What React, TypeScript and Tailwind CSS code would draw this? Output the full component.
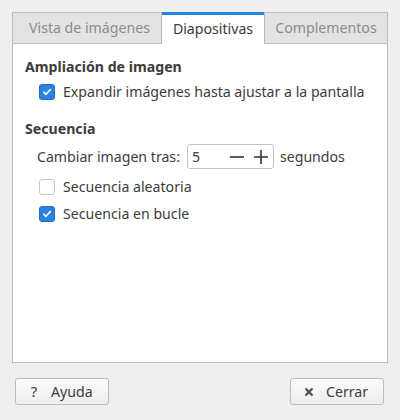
import React from "react";

const FONT = { fontFamily: '"Noto Sans", "Open Sans", sans-serif' };

function Check({ checked }: { checked: boolean }) {
  if (checked) {
    return (
      <div className="w-[16px] h-[16px] rounded-[3px] bg-[#2a83e0] border border-[#1f6fc4] flex items-center justify-center">
        <svg width="10" height="10" viewBox="0 0 10 10">
          <path d="M1.8 5.2 L4 7.3 L8.3 2.6" fill="none" stroke="white" strokeWidth="1.6" strokeLinecap="round" strokeLinejoin="round" />
        </svg>
      </div>
    );
  }
  return <div className="w-[16px] h-[16px] rounded-[3px] bg-white border border-[#c6c6c6]" />;
}

export default function App() {
  return (
    <div className="w-[400px] h-[420px] bg-[#efefef] text-[#3c3c3c] text-[14.15px] flex flex-col" style={FONT}>
      <div className="ml-[12px] mt-[12px] w-[376px] flex flex-col">
        {/* tab bar */}
        <div className="flex h-[32px]">
          <div className="w-[149px] h-full bg-[#e3e3e3] border-t border-l border-b border-[#bdbdbd] flex items-center pl-[16px] text-[#8c8c8c]">
            Vista de imágenes
          </div>
          <div className="w-[103px] h-full bg-white border-l border-[#bdbdbd] flex flex-col">
            <div className="h-[3px] bg-[#1e84e0]" />
            <div className="flex-1 flex items-center justify-center pb-[2px]">Diapositivas</div>
          </div>
          <div className="w-[124px] h-full bg-[#e3e3e3] border-t border-l border-r border-b border-[#bdbdbd] flex items-center justify-center text-[#8c8c8c]">
            Complementos
          </div>
        </div>
        {/* panel */}
        <div className="h-[319px] bg-white border-l border-r border-b border-[#bdbdbd] flex flex-col pl-[12px] pt-[13px]">
          <div className="h-[20px] flex items-center font-bold">Ampliación de imagen</div>
          <div className="h-[22px] mt-[4px] ml-[14px] flex items-center gap-[8px]">
            <Check checked />
            <span>Expandir imágenes hasta ajustar a la pantalla</span>
          </div>
          <div className="h-[20px] mt-[16px] flex items-center font-bold">Secuencia</div>
          <div className="h-[25px] mt-[5px] ml-[12px] flex items-center">
            <span>Cambiar imagen tras:</span>
            <div className="ml-[7px] w-[87px] h-[25px] rounded-[3px] border border-[#c4c4c4] bg-white flex items-center">
              <span className="ml-[4px] flex-1">5</span>
              <svg width="16" height="16" viewBox="0 0 16 16" className="mr-[8px]">
                <path d="M1 8 H15" stroke="#333" strokeWidth="1.6" />
              </svg>
              <svg width="16" height="16" viewBox="0 0 16 16" className="mr-[4px]">
                <path d="M1 8 H15 M8 1 V15" stroke="#333" strokeWidth="1.6" />
              </svg>
            </div>
            <span className="ml-[6px]">segundos</span>
          </div>
          <div className="h-[22px] mt-[7px] ml-[14px] flex items-center gap-[8px]">
            <Check checked={false} />
            <span>Secuencia aleatoria</span>
          </div>
          <div className="h-[22px] mt-[5px] ml-[14px] flex items-center gap-[8px]">
            <Check checked />
            <span>Secuencia en bucle</span>
          </div>
        </div>
      </div>
      {/* buttons */}
      <div className="mt-[15px] ml-[15px] mr-[16px] flex justify-between">
        <button className="w-[94px] h-[27px] rounded-[3px] border border-[#bcbcbc] bg-gradient-to-b from-[#fbfbfb] to-[#ededed] flex items-center pl-[12px]">
          <span className="w-[12px] text-center text-[15px]">?</span>
          <span className="ml-[11px]">Ayuda</span>
        </button>
        <button className="w-[94px] h-[27px] rounded-[3px] border border-[#bcbcbc] bg-gradient-to-b from-[#fbfbfb] to-[#ededed] flex items-center pl-[12px]">
          <svg width="12" height="12" viewBox="0 0 12 12">
            <path d="M2.5 2.5 L9.5 9.5 M9.5 2.5 L2.5 9.5" stroke="#444" strokeWidth="1.8" />
          </svg>
          <span className="ml-[11px]">Cerrar</span>
        </button>
      </div>
    </div>
  );
}
